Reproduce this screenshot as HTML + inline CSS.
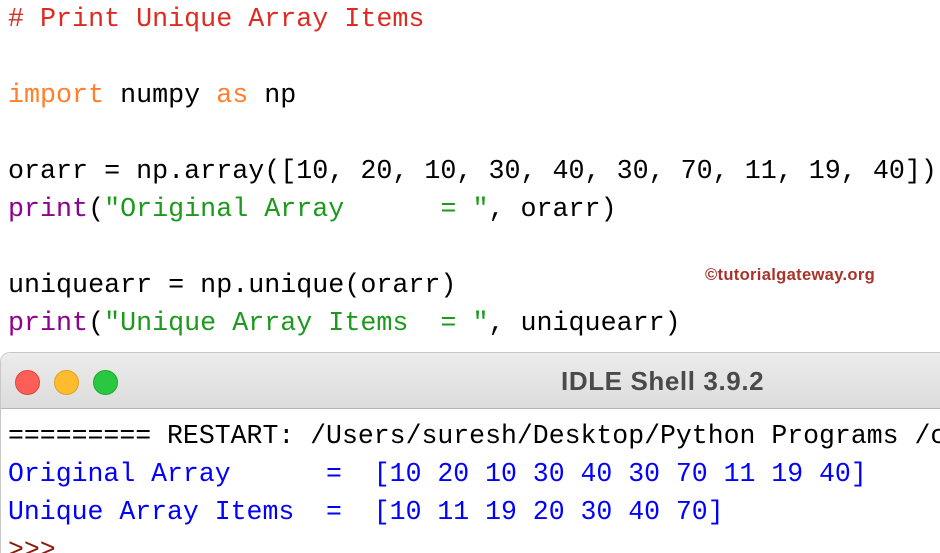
<!DOCTYPE html>
<html><head><meta charset="utf-8"><style>
html,body{margin:0;width:940px;height:553px;overflow:hidden}
body{background:#fff;position:relative;font-family:"Liberation Mono",monospace}
.ed{position:absolute;left:8px;top:1px;font-size:26.7px;line-height:38px;white-space:pre;color:#000}
.c{color:#dd2b22}.k{color:#ff7f2a}.s{color:#1d9a1d}.b{color:#900090}
.wm{position:absolute;left:705px;top:265px;font-family:"Liberation Sans",sans-serif;font-weight:bold;font-size:16.6px;color:#a8332a;letter-spacing:0.3px}
.win{position:absolute;left:0;top:352px;width:960px;height:200px;border-top-left-radius:10px;border:1px solid #c8c8c8;border-bottom:none;background:#fff}
.tb{height:55px;background:linear-gradient(#ececec,#dcdcdc);border-bottom:1px solid #b5b5b5;border-top-left-radius:10px;position:relative}
.dot{position:absolute;top:17px;width:23px;height:23px;border-radius:50%}
.tt{position:absolute;left:560px;top:13px;font-family:"Liberation Sans",sans-serif;font-weight:bold;font-size:26px;letter-spacing:0.6px;color:#4a4a4a}
.sh{position:absolute;left:8px;top:417px;font-size:26.5px;line-height:38px;white-space:pre;color:#000}
.bl{color:#0000ff}.pr{color:#8b1a10}
</style></head><body>
<div class="ed"><span class="c"># Print Unique Array Items</span>

<span class="k">import</span> numpy <span class="k">as</span> np

orarr = np.array([10, 20, 10, 30, 40, 30, 70, 11, 19, 40])
<span class="b">print</span>(<span class="s">"Original Array      = "</span>, orarr)

uniquearr = np.unique(orarr)
<span class="b">print</span>(<span class="s">"Unique Array Items  = "</span>, uniquearr)</div>
<div class="wm">©tutorialgateway.org</div>
<div class="win"><div class="tb">
<div class="dot" style="left:14px;background:#fc5f57;border:1px solid #e0443e"></div>
<div class="dot" style="left:53px;background:#febc2e;border:1px solid #dea123"></div>
<div class="dot" style="left:92px;background:#29c840;border:1px solid #1aab29"></div>
<div class="tt">IDLE Shell 3.9.2</div></div></div>
<div class="sh">========= RESTART: /Users/suresh/Desktop/Python Programs /c
<span class="bl">Original Array      =  [10 20 10 30 40 30 70 11 19 40]</span>
<span class="bl">Unique Array Items  =  [10 11 19 20 30 40 70]</span>
<span class="pr">&gt;&gt;&gt;</span></div>
</body></html>
